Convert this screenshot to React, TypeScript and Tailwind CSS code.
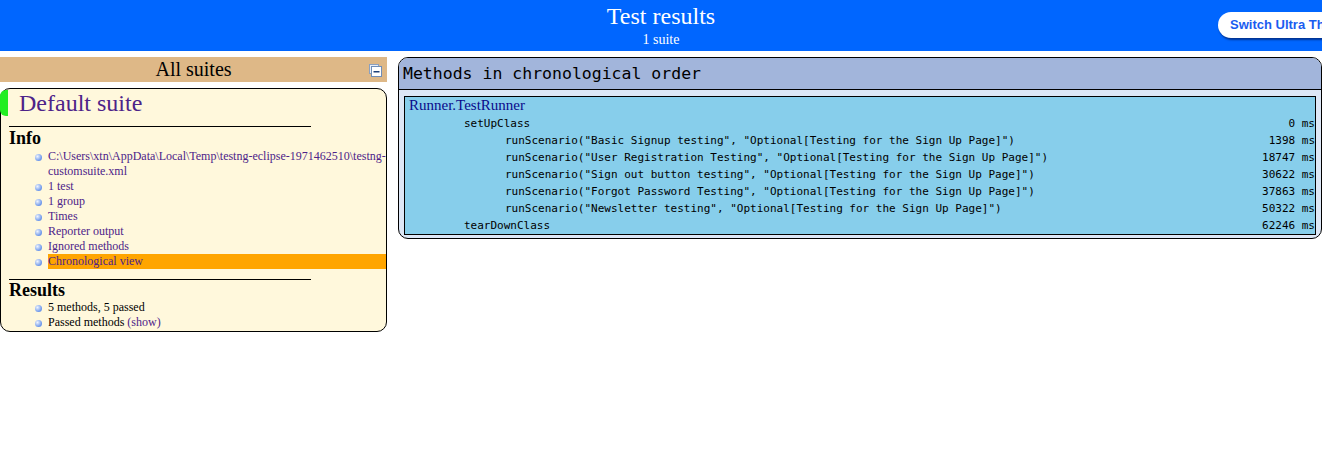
import React from 'react';

const infoItems = [
  'C:\\Users\\xtn\\AppData\\Local\\Temp\\testng-eclipse-1971462510\\testng-customsuite.xml',
  '1 test',
  '1 group',
  'Times',
  'Reporter output',
  'Ignored methods',
];

const methods: { name: string; time: string; level: number }[] = [
  { name: 'setUpClass', time: '0 ms', level: 1 },
  { name: 'runScenario("Basic Signup testing", "Optional[Testing for the Sign Up Page]")', time: '1398 ms', level: 2 },
  { name: 'runScenario("User Registration Testing", "Optional[Testing for the Sign Up Page]")', time: '18747 ms', level: 2 },
  { name: 'runScenario("Sign out button testing", "Optional[Testing for the Sign Up Page]")', time: '30622 ms', level: 2 },
  { name: 'runScenario("Forgot Password Testing", "Optional[Testing for the Sign Up Page]")', time: '37863 ms', level: 2 },
  { name: 'runScenario("Newsletter testing", "Optional[Testing for the Sign Up Page]")', time: '50322 ms', level: 2 },
  { name: 'tearDownClass', time: '62246 ms', level: 1 },
];

function Bullet() {
  return (
    <span className="mt-[5px] h-[7px] w-[7px] shrink-0 rounded-full bg-[radial-gradient(circle_at_35%_35%,#eef4ff,#6a95ea_70%)]" />
  );
}

function CollapseIcon() {
  return (
    <svg width="13" height="13" viewBox="0 0 13 13" className="absolute right-[5px] top-[7px]">
      <rect x="0.5" y="0.5" width="9" height="9" fill="#e8eef8" stroke="#8aa0c0" />
      <rect x="2.5" y="2.5" width="10" height="10" fill="#ffffff" stroke="#6f8db8" />
      <rect x="4.5" y="7" width="6" height="1.5" fill="#1d3f78" />
    </svg>
  );
}

export default function App() {
  return (
    <div className="w-[1322px] h-[474px] overflow-hidden bg-white font-['Liberation_Serif',serif]">
      {/* Header */}
      <div className="relative h-[51px] bg-[#0066ff] text-white text-center">
        <div className="pt-[2px] text-[24px] leading-[28px]">Test results</div>
        <div className="mt-[2px] text-[14px] leading-[16px]">1 suite</div>
        <div className="absolute left-[1218px] top-[12px] h-[26px] w-[140px] rounded-full bg-white pl-[12px] text-left font-['Liberation_Sans',sans-serif] text-[13px] font-bold leading-[26px] text-[#1a5cf0] shadow-[1px_2px_2px_rgba(0,0,40,0.5)] whitespace-nowrap">
          Switch Ultra Theme
        </div>
      </div>

      <div className="mt-[6px] flex items-start">
        {/* Navigator */}
        <div className="w-[387px] shrink-0">
          <div className="relative h-[25px] bg-[#deb887] text-center text-[20px] leading-[25px] text-black">
            All suites
            <CollapseIcon />
          </div>
          <div className="relative mt-[6px] h-[244px] rounded-[10px] border border-black bg-[#fff8dc]">
            <div className="absolute -left-[1px] top-[1px] h-[26px] w-[8px] rounded-l-[6px] bg-[#22ee22]" />
            <div className="pl-[18px] text-[24px] leading-[28px] text-[#4d2389]">Default suite</div>
            <div className="ml-[8px] mt-[9px] w-[302px] border-t border-black" />
            <div className="pl-[8px] pt-[1px] text-[18px] font-bold leading-[20px] text-black">Info</div>
            <ul className="pt-[1px] text-[12px] leading-[15px] text-[#4d2389]">
              {infoItems.map((t) => (
                <li key={t} className="flex gap-[6px] pl-[34px]">
                  <Bullet />
                  <span className="break-words min-w-0">{t}</span>
                </li>
              ))}
              <li className="flex gap-[6px] pl-[34px]">
                <Bullet />
                <span className="flex-1 bg-[#ffa500]">Chronological view</span>
              </li>
            </ul>
            <div className="ml-[8px] mt-[10px] w-[302px] border-t border-black" />
            <div className="pl-[8px] text-[18px] font-bold leading-[20px] text-black">Results</div>
            <ul className="text-[12px] leading-[15px] text-black">
              <li className="flex gap-[6px] pl-[34px]">
                <Bullet />
                <span>5 methods, 5 passed</span>
              </li>
              <li className="flex gap-[6px] pl-[34px]">
                <Bullet />
                <span>
                  Passed methods <span className="text-[#4d2389]">(show)</span>
                </span>
              </li>
            </ul>
          </div>
        </div>

        {/* Main panel */}
        <div className="ml-[11px] h-[182px] w-[924px] shrink-0 overflow-hidden rounded-[10px] border border-black bg-[#dde7f6]">
          <div className="h-[32px] border-b border-black bg-[#a2b5db] pl-[4px] font-['DejaVu_Sans_Mono',monospace] text-[16.5px] leading-[32px] text-black">
            Methods in chronological order
          </div>
          <div className="px-[5px] pt-[6px]">
            <div className="border border-black bg-[#87ceeb]">
              <div className="h-[18px] pl-[4px] text-[15px] leading-[17px] text-[#0a0a8a]">Runner.TestRunner</div>
              {methods.map((m) => (
                <div
                  key={m.time}
                  className="flex h-[17px] justify-between font-['DejaVu_Sans_Mono',monospace] text-[11px] leading-[17px] text-black whitespace-pre"
                >
                  <span className={m.level === 1 ? 'pl-[59px]' : 'pl-[100px]'}>{m.name}</span>
                  <span>{m.time}</span>
                </div>
              ))}
            </div>
          </div>
        </div>
      </div>
    </div>
  );
}
